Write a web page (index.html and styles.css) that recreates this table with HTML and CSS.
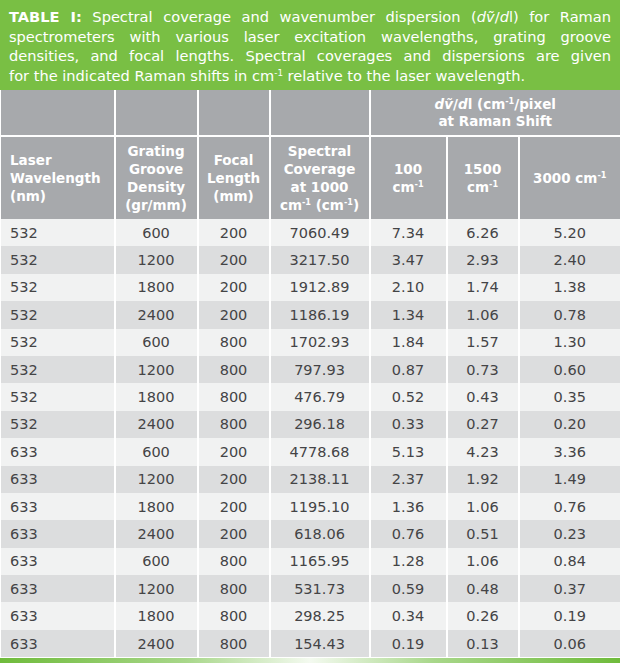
FILE: index.html
```html
<!DOCTYPE html>
<html>
<head>
<meta charset="utf-8">
<link rel="stylesheet" href="styles.css">
</head>
<body>
<div class="wrap">
  <div class="caption">
    <span class="line"><b>TABLE I:</b> Spectral coverage and wavenumber dispersion (<i>d</i><i>ṽ</i>/<i>d</i>l) for Raman</span>
    <span class="line">spectrometers with various laser excitation wavelengths, grating groove</span>
    <span class="line">densities, and focal lengths. Spectral coverages and dispersions are given</span>
    <span class="line last">for the indicated Raman shifts in cm<sup>-1</sup> relative to the laser wavelength.</span>
  </div>
  <table class="data">
    <colgroup>
      <col class="c1"><col class="c2"><col class="c3"><col class="c4"><col class="c5"><col class="c6"><col class="c7">
    </colgroup>
    <thead>
      <tr class="h1">
        <th></th><th></th><th></th><th></th>
        <th colspan="3"><i>d</i><i>ṽ</i>/<i>d</i>l (cm<sup>-1</sup>/pixel<br>at Raman Shift</th>
      </tr>
      <tr class="h2">
        <th class="left">Laser<br>Wavelength<br>(nm)</th>
        <th>Grating<br>Groove<br>Density<br>(gr/mm)</th>
        <th>Focal<br>Length<br>(mm)</th>
        <th>Spectral<br>Coverage<br>at 1000<br>cm<sup>-1</sup> (cm<sup>-1</sup>)</th>
        <th>100<br>cm<sup>-1</sup></th>
        <th>1500<br>cm<sup>-1</sup></th>
        <th>3000 cm<sup>-1</sup></th>
      </tr>
    </thead>
    <tbody>
      <tr><td>532</td><td>600</td><td>200</td><td>7060.49</td><td>7.34</td><td>6.26</td><td>5.20</td></tr>
      <tr><td>532</td><td>1200</td><td>200</td><td>3217.50</td><td>3.47</td><td>2.93</td><td>2.40</td></tr>
      <tr><td>532</td><td>1800</td><td>200</td><td>1912.89</td><td>2.10</td><td>1.74</td><td>1.38</td></tr>
      <tr><td>532</td><td>2400</td><td>200</td><td>1186.19</td><td>1.34</td><td>1.06</td><td>0.78</td></tr>
      <tr><td>532</td><td>600</td><td>800</td><td>1702.93</td><td>1.84</td><td>1.57</td><td>1.30</td></tr>
      <tr><td>532</td><td>1200</td><td>800</td><td>797.93</td><td>0.87</td><td>0.73</td><td>0.60</td></tr>
      <tr><td>532</td><td>1800</td><td>800</td><td>476.79</td><td>0.52</td><td>0.43</td><td>0.35</td></tr>
      <tr><td>532</td><td>2400</td><td>800</td><td>296.18</td><td>0.33</td><td>0.27</td><td>0.20</td></tr>
      <tr><td>633</td><td>600</td><td>200</td><td>4778.68</td><td>5.13</td><td>4.23</td><td>3.36</td></tr>
      <tr><td>633</td><td>1200</td><td>200</td><td>2138.11</td><td>2.37</td><td>1.92</td><td>1.49</td></tr>
      <tr><td>633</td><td>1800</td><td>200</td><td>1195.10</td><td>1.36</td><td>1.06</td><td>0.76</td></tr>
      <tr><td>633</td><td>2400</td><td>200</td><td>618.06</td><td>0.76</td><td>0.51</td><td>0.23</td></tr>
      <tr><td>633</td><td>600</td><td>800</td><td>1165.95</td><td>1.28</td><td>1.06</td><td>0.84</td></tr>
      <tr><td>633</td><td>1200</td><td>800</td><td>531.73</td><td>0.59</td><td>0.48</td><td>0.37</td></tr>
      <tr><td>633</td><td>1800</td><td>800</td><td>298.25</td><td>0.34</td><td>0.26</td><td>0.19</td></tr>
      <tr><td>633</td><td>2400</td><td>800</td><td>154.43</td><td>0.19</td><td>0.13</td><td>0.06</td></tr>
    </tbody>
  </table>
  <div class="bottom-bar"></div>
</div>
</body>
</html>
```

FILE: styles.css
```css
html, body {
  margin: 0;
  padding: 0;
  background: #ffffff;
}
.wrap {
  width: 620px;
  font-family: "DejaVu Sans", "Open Sans", sans-serif;
}
.caption {
  background: #79bf44;
  color: #ffffff;
  height: 90px;
  box-sizing: border-box;
  padding: 7px 9px 0 9px;
  font-size: 14.6px;
  line-height: 19.5px;
}
.caption .line {
  display: block;
  white-space: nowrap;
  text-align: justify;
  text-align-last: justify;
}
.caption .line.last {
  text-align-last: left;
}
.caption b {
  font-weight: bold;
}
sup {
  font-size: 0.6em;
  line-height: 0;
  vertical-align: 0.6em;
}
.data {
  width: 620px;
  border-collapse: collapse;
  table-layout: fixed;
}
.c1 { width: 114px; }
.c2 { width: 83px; }
.c3 { width: 72px; }
.c4 { width: 100px; }
.c5 { width: 77px; }
.c6 { width: 72px; }
.c7 { width: 102px; }
.data th {
  background: #a7a9ac;
  color: #ffffff;
  font-weight: bold;
  font-size: 13.5px;
  line-height: 18px;
  text-align: center;
  border-left: 2px solid #ffffff;
  border-right: 2px solid #ffffff;
  padding: 0 2px;
}
.data tr.h1 th {
  height: 45px;
  border-bottom: 2px solid #ffffff;
  line-height: 16.5px;
}
.data tr.h2 th {
  height: 82px;
}
.data th.left {
  text-align: left;
  padding-left: 9px;
}
.data th:first-child, .data td:first-child {
  border-left: 1px solid #ffffff;
}
.data th:last-child, .data td:last-child {
  border-right: 1px solid #ffffff;
}
.data td {
  height: 27.4px;
  padding: 0;
  font-size: 14.5px;
  color: #444446;
  text-align: center;
  border-left: 2px solid #ffffff;
  border-right: 2px solid #ffffff;
  background: #f1f2f2;
}
.data td:first-child {
  text-align: left;
  padding-left: 9px;
}
.data tbody tr:nth-child(even) td {
  background: #dcddde;
}
.bottom-bar {
  height: 5px;
  margin-top: 1px;
  background: linear-gradient(to right, #6fbb3b 0%, #a8d78a 30%, #f4faf0 50%, #a8d78a 70%, #6fbb3b 100%);
}
```
